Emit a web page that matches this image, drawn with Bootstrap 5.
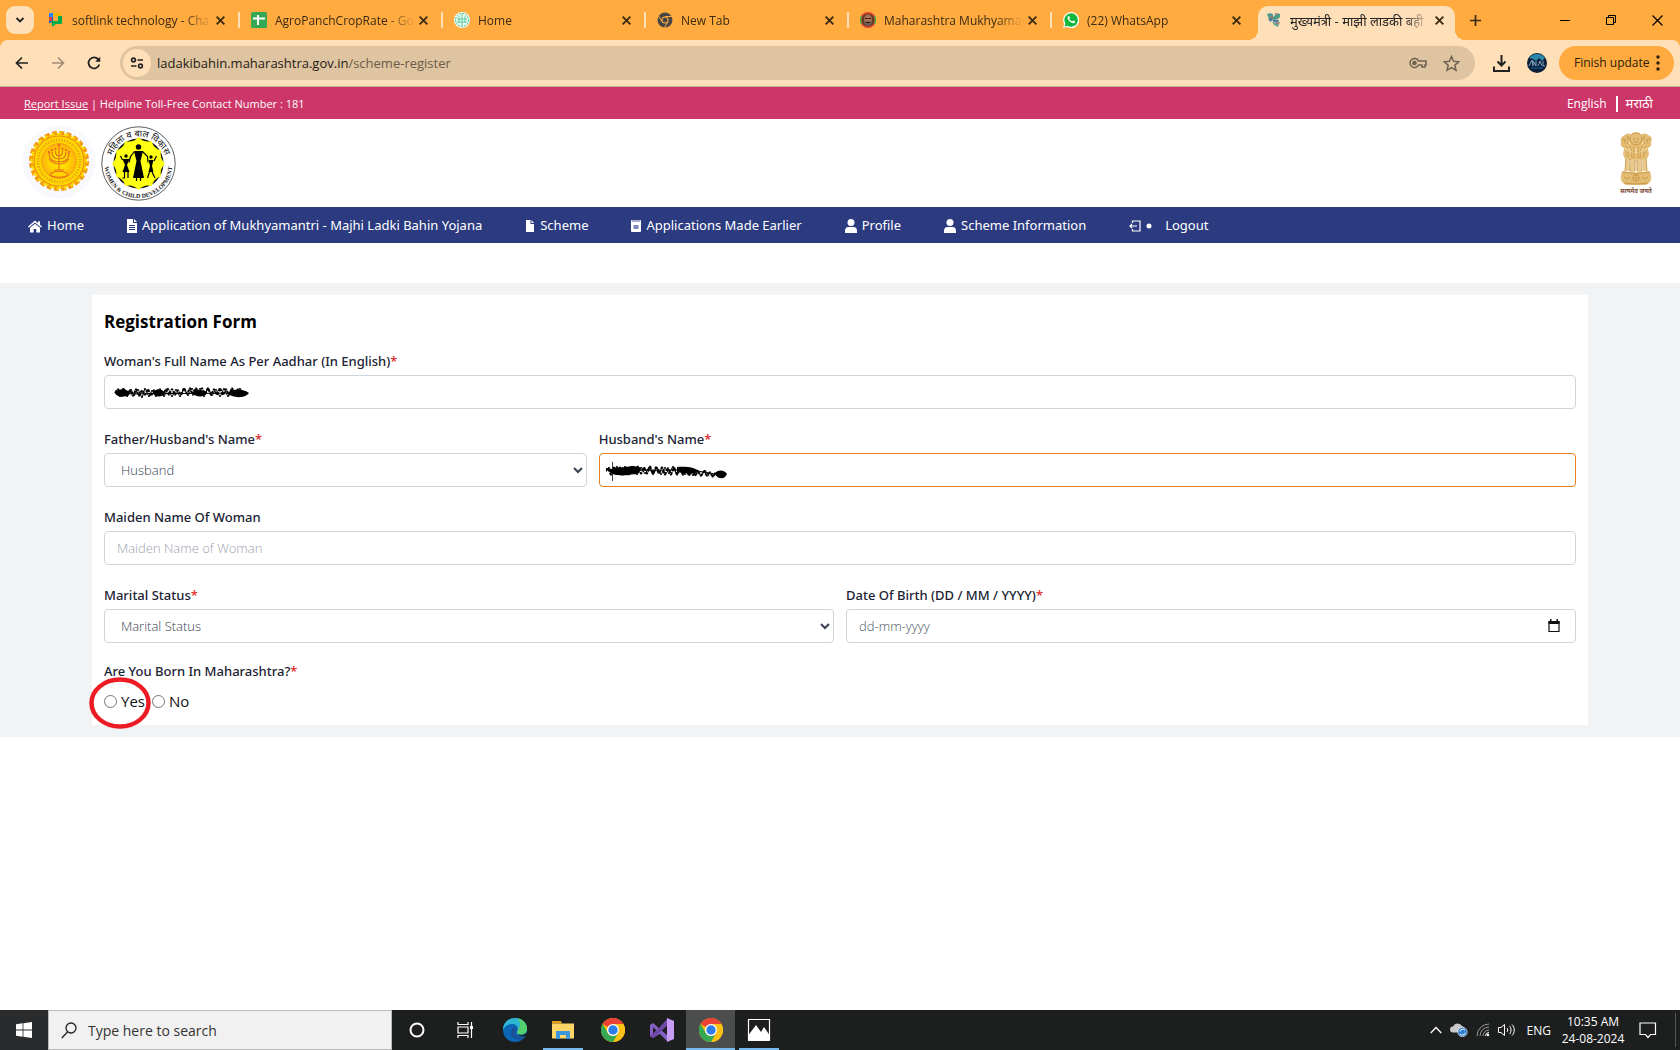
<!DOCTYPE html>
<html lang="en">
<head>
<meta charset="utf-8">
<meta name="viewport" content="width=device-width, initial-scale=1">
<title>Registration Form</title>
<link href="https://cdn.jsdelivr.net/npm/bootstrap@5.3.0/dist/css/bootstrap.min.css" rel="stylesheet">
<style>
body{font-family:"Open Sans","Noto Sans",sans-serif;font-size:14px;background:#fff;color:#111827;overflow-x:hidden}
svg{display:block;flex:none}
.plain{background:none;border:0;padding:0;color:inherit;display:flex;align-items:center;justify-content:center}
.tabstrip{background:#ffab40;height:40px;font-size:12px;color:#3b2a14}
.tab-menu{width:28px;height:28px;border-radius:9px;background:#ffdfb8;margin:0 3px 0 6px}
.btab{width:203px;height:40px;padding:0 13px 0 11px;gap:8px;position:relative;white-space:nowrap}
.btab .ttl{flex:1;overflow:hidden;line-height:18px;padding-top:2px;margin-right:-8px;-webkit-mask-image:linear-gradient(90deg,#000 78%,transparent 98%);mask-image:linear-gradient(90deg,#000 78%,transparent 98%)}
.btab.sep{border-right:2px solid #ffdfb8;border-image:linear-gradient(transparent 12px,#ffdfb8 12px,#ffdfb8 28px,transparent 28px) 1;padding-right:12px}
.btab.current .face{position:absolute;inset:6px 3px 0 3px;background:#ffdfb8;border-radius:10px 10px 0 0}
.btab.current .face::before,.btab.current .face::after{content:"";position:absolute;bottom:0;width:10px;height:10px}
.btab.current .face::before{left:-10px;background:radial-gradient(circle at 0 0,transparent 10px,#ffdfb8 10px)}
.btab.current .face::after{right:-10px;background:radial-gradient(circle at 100% 0,transparent 10px,#ffdfb8 10px)}
.btab.current>*:not(.face){position:relative}
.btab.current .ttl{font-size:13px;color:#222}
.win{width:46px;height:40px;color:#000}
.toolbar-wrap{background:#ffab40}
.toolbar{background:#ffdfb8;height:47px;border-bottom:1px solid #c9ae8c;border-radius:8px 8px 0 0;padding:0 6px 0 4px;color:#222}
.tool{width:36px;height:36px}
.omni{background:#dfc4a1;height:34px;border-radius:17px;margin:0 8px;padding:0 15px 0 3px}
.omni .site{width:28px;height:28px;border-radius:50%;background:#ffdfb8}
.address{font-size:13px;color:#1f1b16;padding:2px 0 0 6px}
.address span{color:#6b5b48}
.finish{background:#ffab40;border:0;border-radius:17px;height:34px;width:115px;font-size:12px;color:#2b1d0b;padding:0 14px 0 15px;white-space:nowrap}
.pinkbar{background:#cd3669;color:#fff;height:32px;font-size:11px;padding:2px 27px 0 24px}
.pinkbar a{color:#fff}
.pinkbar .lang a{text-decoration:none}
.pinkbar .en{font-size:12px}
.pinkbar .mr{font-size:13px}
.vline{width:2px;height:16px;background:#fff;margin:0 8px 0 9px}
.masthead{height:88px;padding:0 26px 0 22px}
.bluenav{background:#2c3b80;height:36px;padding:2px 28px 0;gap:43px}
.bluenav a{color:#fff;text-decoration:none;gap:5px;font-family:"Noto Sans","Open Sans",sans-serif;font-size:13px;white-space:nowrap}
.band{background:#f2f3f5;margin-top:40px;padding:12px 92px}
.sheet{background:#fff;padding:12px}
.sheet h1{font-size:17px;line-height:30px;font-weight:700;margin:0 0 12px;color:#000}
.fields{--bs-gutter-x:12px}
.fields>div{margin-bottom:18px}
.lbl{display:block;font-family:"Noto Sans","Open Sans",sans-serif;font-size:13px;line-height:20px;font-weight:500;padding-top:2px;margin-bottom:4px;color:#1b2333}
.lbl i{color:#e02424;font-style:normal}
.fld{display:block;width:100%;height:34px;border:1px solid #d1d5db;border-radius:4px;background:#fff;padding:0 12px;font-size:13px;font-weight:300;color:#374151;outline:0}
.fld::placeholder{color:#9ca3af;opacity:1}
.fld.hot{border-color:#e87f1e}
.fld.date::placeholder{color:#4b5563}
.blot{position:absolute;left:7px;top:9px}
.choices{font-size:15px;line-height:24px;gap:7px;padding-top:8px;color:#111}
.choices input{width:13px;height:13px;margin:0 4px 0 0}
.choices label{display:flex;align-items:center}
.ring{position:absolute;left:-16px;top:-5px}
.taskbar{background:#1d1f1f;height:40px;color:#fff;margin-top:auto}
.start{width:48px;height:40px;background:#292b2c}
.search{width:344px;height:40px;background:#f1f1f1;border:1px solid #bbb;padding:0 12px;gap:11px}
.search input{border:0;background:none;outline:0;font-size:14px;color:#222;flex:1;padding:0;min-width:0}
.search input::placeholder{color:#333;opacity:1}
.app{width:49px;height:40px}
.app.open{box-shadow:inset 0 -2px #76b9ed}
.app.narrow{width:40px;margin:0 5px 0 4px}
.app.front{background:#4c4e4e}
.tray{font-size:12px;line-height:17px}
.clock{width:76px;text-align:center;margin:0 8px 0 4px}
.notice{margin-right:18px}
</style>
<script src="https://cdn.jsdelivr.net/npm/bootstrap@5.3.0/dist/js/bootstrap.bundle.min.js"></script>
</head>
<body class="d-flex flex-column min-vh-100">
<svg width="0" height="0" class="position-absolute" aria-hidden="true">
<defs>
<symbol id="x" viewBox="0 0 10 10"><path d="M1.500 1.500l7 7M8.500 1.500l-7 7" stroke="#3b2a14" stroke-width="1.700"/></symbol>
<symbol id="chrome" viewBox="0 0 24 24"><circle cx="12" cy="12" r="12" fill="#fbbc04"/><path d="M12 12L1.600 6A12 12 0 0 1 22.400 6z" fill="#ea4335"/><path d="M12 6h10.400A12 12 0 0 1 12 24l5.200-9z" fill="#fbc116"/><path d="M1.600 6A12 12 0 0 0 12 24l5.200-9A6 6 0 0 1 6.800 15z" fill="#34a853"/><circle cx="12" cy="12" r="6" fill="#fff"/><circle cx="12" cy="12" r="4.700" fill="#2f7de9"/></symbol>
<symbol id="user" viewBox="0 0 12 14"><circle cx="6" cy="3.500" r="3.500" fill="#fff"/><path d="M0 14v-2.500C0 9 1.700 8 3.500 8h5C10.300 8 12 9 12 11.500V14z" fill="#fff"/></symbol>
</defs>
</svg>

<header>
<div class="tabstrip d-flex align-items-center">
  <button class="plain tab-menu" aria-label="Search tabs"><svg width="10" height="8" viewBox="0 0 10 8"><path d="M1.500 2L5 5.500 8.500 2" fill="none" stroke="#222" stroke-width="1.800"/></svg></button>
  <div class="btab sep d-flex align-items-center">
    <svg width="16" height="16" viewBox="0 0 16 16"><path d="M1 4h4v6l-4 1z" fill="#0066da"/><path d="M1 2q0-1 1-1h3v4H1z" fill="#2684fc"/><path d="M5 1h7q1 0 1 1v2H5z" fill="#f4b400"/><path d="M1 5h3v4H1z" fill="#ea4335"/><path d="M4 9h6V4h4v7q0 1-1 1H8l-4 3z" fill="#00ac47"/></svg>
    <span class="ttl">softlink technology - Cha</span><button class="plain" aria-label="Close tab"><svg width="11" height="11"><use href="#x"/></svg></button>
  </div>
  <div class="btab sep d-flex align-items-center">
    <svg width="16" height="16" viewBox="0 0 16 16"><rect width="16" height="16" rx="1.500" fill="#34a853"/><path d="M7 3v10M2 6.500h12" stroke="#fff" stroke-width="2"/></svg>
    <span class="ttl">AgroPanchCropRate - Go</span><button class="plain" aria-label="Close tab"><svg width="11" height="11"><use href="#x"/></svg></button>
  </div>
  <div class="btab sep d-flex align-items-center">
    <svg width="16" height="16" viewBox="0 0 16 16"><circle cx="8" cy="8" r="8" fill="#eefcf4"/><g fill="none" stroke="#3dbf92"><circle cx="8" cy="8" r="6.500" stroke-dasharray="2 1"/><path d="M8 2v12M3 7h10M5 4v7M11 4v7M3 10h10" stroke-width=".8"/></g></svg>
    <span class="ttl">Home</span><button class="plain" aria-label="Close tab"><svg width="11" height="11"><use href="#x"/></svg></button>
  </div>
  <div class="btab sep d-flex align-items-center">
    <svg width="16" height="16" viewBox="0 0 16 16"><circle cx="8" cy="8" r="7.500" fill="#474747"/><circle cx="8" cy="8" r="3.600" fill="#ffab40"/><circle cx="8" cy="8" r="2.500" fill="#474747"/><path d="M8 4.500h7M5 9.500L1.500 4M11 9.700L7.500 15.500" stroke="#ffab40" stroke-width="1"/></svg>
    <span class="ttl">New Tab</span><button class="plain" aria-label="Close tab"><svg width="11" height="11"><use href="#x"/></svg></button>
  </div>
  <div class="btab sep d-flex align-items-center">
    <svg width="16" height="16" viewBox="0 0 16 16"><circle cx="8" cy="8" r="7.300" fill="#6b3a26" stroke="#e8432c" stroke-width="1.400"/><path d="M14.500 4a8 8 0 0 1 0 8M1.500 4a8 8 0 0 0 0 8" fill="none" stroke="#43b649" stroke-width="1.400"/><ellipse cx="8" cy="7.500" rx="4" ry="5" fill="#a87458"/><path d="M4 9c1 .6 2 .6 4 .6S11 9.600 12 9c0 4-2 5-4 5S4 13 4 9z" fill="#6d5a52"/><path d="M5 6.500h2.500M8.500 6.500H11M6 10.500h4" stroke="#311"/></svg>
    <span class="ttl">Maharashtra Mukhyamar</span><button class="plain" aria-label="Close tab"><svg width="11" height="11"><use href="#x"/></svg></button>
  </div>
  <div class="btab d-flex align-items-center">
    <svg width="16" height="16" viewBox="0 0 16 16"><path d="M0 16l1.200-4A8 8 0 1 1 4 14.900z" fill="#fff"/><path d="M1.500 14.500l.9-3A6.700 6.700 0 1 1 4.600 13.700z" fill="#12b83d"/><path d="M5 4.500c.8-1 1.300-.6 1.900 1 .2.600-.7 1-.5 1.400.6 1.200 1.600 2 2.700 2.500.5.200 1-1 1.400-.8 1.700.8 2 1 1.300 2-2 2.300-7.600-2-7.200-5z" fill="#fff"/></svg>
    <span class="ttl">(22) WhatsApp</span><button class="plain" aria-label="Close tab"><svg width="11" height="11"><use href="#x"/></svg></button>
  </div>
  <div class="btab current d-flex align-items-center">
    <span class="face"></span>
    <svg width="16" height="16" viewBox="0 0 16 16"><path d="M1 2h6v3l3-3h4v3l-2 2H5L2 5z" fill="#4f9c86"/><path d="M1 2l4-1 1 2zM9 3l3-2 2 2z" fill="#3d92a6"/><path d="M2 6h4l1 2-3 2zM7 7l6 1-1 3-5-1z" fill="#4d7fa0"/><path d="M6 10l3 1 5-1-2 5-4-2z" fill="#66a892"/><path d="M9 1.500l3 1M4 5.500h3M10 12l3-1" stroke="#d0644d"/></svg>
    <span class="ttl">मुख्यमंत्री - माझी लाडकी बही</span><button class="plain" aria-label="Close tab"><svg width="11" height="11"><use href="#x"/></svg></button>
  </div>
  <button class="plain ms-2 px-1" aria-label="New tab"><svg width="11" height="11" viewBox="0 0 11 11"><path d="M5.500 0v11M0 5.500h11" stroke="#3b2a14" stroke-width="1.700"/></svg></button>
  <div class="d-flex ms-auto">
    <button class="win plain" aria-label="Minimize"><svg width="10" height="10"><path d="M0 5.500h10" stroke="#000"/></svg></button>
    <button class="win plain" aria-label="Restore"><svg width="10" height="10" fill="none" stroke="#000"><path d="M.5 2.500h7v7h-7zM2.500 2.500v-2h7v7h-2"/></svg></button>
    <button class="win plain" aria-label="Close"><svg width="11" height="11"><path d="M.5 .5l10 10M10.500 .5l-10 10" stroke="#000" stroke-width="1.200"/></svg></button>
  </div>
</div>
<div class="toolbar-wrap"><div class="toolbar d-flex align-items-center">
  <button class="tool plain" aria-label="Back"><svg width="14" height="14" viewBox="0 0 14 14"><path d="M13 7H2M7 1.500L1.500 7 7 12.500" fill="none" stroke="#222" stroke-width="1.700"/></svg></button>
  <button class="tool plain" aria-label="Forward"><svg width="14" height="14" viewBox="0 0 14 14"><path d="M1 7h11M7 1.500L12.500 7 7 12.500" fill="none" stroke="#a08e77" stroke-width="1.600"/></svg></button>
  <button class="tool plain" aria-label="Reload"><svg width="14" height="14" viewBox="0 0 14 14"><path d="M12.300 8.500A5.500 5.500 0 1 1 11.200 3.300L12.500 5" fill="none" stroke="#222" stroke-width="1.800"/><path d="M13.200 .8v5H8.200z" fill="#222"/></svg></button>
  <div class="omni d-flex align-items-center flex-grow-1">
    <button class="plain site" aria-label="Site information"><svg width="14" height="12" viewBox="0 0 14 12" fill="none" stroke="#222" stroke-width="1.600"><circle cx="3.500" cy="3" r="1.900"/><path d="M7.500 3H13M1 9h5.500"/><circle cx="10.500" cy="9" r="1.900"/></svg></button>
    <a class="address text-decoration-none flex-grow-1" href="#">ladakibahin.maharashtra.gov.in<span>/scheme-register</span></a>
    <svg width="18" height="12" viewBox="0 0 18 12" fill="none" stroke="#6f6250" stroke-width="1.500"><path d="M9.600 4H17v4h-1v2h-3V8H9.600A4.500 4.500 0 1 1 9.600 4z"/><circle cx="5.500" cy="6" r="1.600" fill="#6f6250"/></svg>
    <svg class="ms-3" width="17" height="17" viewBox="0 0 17 17"><path d="M8.500 1.500l2.100 4.800 5.100.5-3.900 3.400 1.200 5.100-4.500-2.700L4 15.300l1.200-5.100L1.300 6.800l5.100-.5z" fill="none" stroke="#6f6250" stroke-width="1.500"/></svg>
  </div>
  <button class="tool plain" aria-label="Downloads"><svg width="17" height="17" viewBox="0 0 17 17" fill="none" stroke="#222" stroke-width="2"><path d="M8.500 0v10M4.500 6.500l4 4 4-4M1 11.500V16h15v-4.500"/></svg></button>
  <button class="tool plain me-1" aria-label="Account"><svg width="20" height="20" viewBox="0 0 20 20"><circle cx="10" cy="10" r="10" fill="#0b1f38"/><path d="M2 5a10 10 0 0 1 16 0l-3 3-3-3-3 3-3-2z" fill="#2b87a8"/><path d="M2 13l3-6 1 6M6 13V8l3 5V8M11 13l2-5 2 5M16 8v5h2" fill="none" stroke="#7fa5c4" stroke-width="1"/><path d="M4 15h12" stroke="#174f80" stroke-width="1.500"/></svg></button>
  <button class="finish d-flex align-items-center justify-content-between">Finish update<svg width="4" height="16" fill="#2b1d0b"><circle cx="2" cy="2" r="1.700"/><circle cx="2" cy="8" r="1.700"/><circle cx="2" cy="14" r="1.700"/></svg></button>
</div></div>
</header>

<div class="pinkbar d-flex align-items-center justify-content-between">
  <div><a href="#">Report Issue</a> | Helpline Toll-Free Contact Number : 181</div>
  <div class="lang d-flex align-items-center"><a class="en" href="#">English</a><span class="vline"></span><a class="mr" href="#" lang="mr">मराठी</a></div>
</div>
<div class="masthead d-flex align-items-center">
  <svg width="74" height="76" viewBox="0 0 74 76" role="img" aria-label="Government of Maharashtra seal">
    <defs><radialGradient id="sun"><stop offset="0" stop-color="#fff000"/><stop offset=".6" stop-color="#ffd200"/><stop offset="1" stop-color="#ffae10"/></radialGradient></defs>
    <circle cx="37" cy="37" r="36.500" fill="#f8f9fc"/>
    <circle cx="37" cy="36" r="28" fill="#ffe000" stroke="#f29a14" stroke-width="4" stroke-dasharray="5 2.330"/>
    <circle cx="37" cy="36" r="27.500" fill="none" stroke="#ffe800" stroke-width="2" stroke-dasharray="2 5.200"/>
    <circle cx="37" cy="36" r="25" fill="#ffdc00" stroke="#f08a10" stroke-width="1.200"/>
    <circle cx="37" cy="36" r="21" fill="none" stroke="#e8891a" stroke-width="3" stroke-dasharray="1.500 1.300" opacity=".65"/>
    <circle cx="37" cy="36" r="17.500" fill="url(#sun)" stroke="#f5a010"/>
    <g fill="none" stroke="#e8721a" stroke-width="1.200"><path d="M37 21v24M27 28c0 7 4 9 10 9s10-2 10-9M30 27c0 5 3 7 7 7s7-2 7-7M33.500 26c0 3 1 5 3.500 5s3.500-2 3.500-5M27 34c3 4 6 5 10 5s7-1 10-5"/><path d="M32 45h10M28 50c3-5 15-5 18 0-3 3-15 3-18 0z" fill="#ffd200"/></g>
    <g fill="#e8721a"><circle cx="37" cy="20" r="1.500"/><circle cx="27" cy="27" r="1.200"/><circle cx="30" cy="25" r="1.200"/><circle cx="33.500" cy="24" r="1.200"/><circle cx="40.500" cy="24" r="1.200"/><circle cx="44" cy="25" r="1.200"/><circle cx="47" cy="27" r="1.200"/></g>
  </svg>
  <svg class="ms-1" width="76" height="76" viewBox="0 0 76 76" role="img" aria-label="Women and Child Development">
    <defs><path id="arcT" d="M11 39a27.500 27.500 0 0 1 55 0"/><path id="arcB" d="M4.500 39a34 34 0 0 0 68 0"/></defs>
    <circle cx="38.500" cy="38.500" r="36.700" fill="#fff" stroke="#333" stroke-width=".8"/>
    <circle cx="38.500" cy="38.500" r="25" fill="#111"/>
    <path d="M38.500 12Q44 18 51.500 16Q54 24 61 25.500Q59.500 33 65 38.500Q59.500 44 61 51.500Q54 53 51.500 61Q44 59 38.500 65Q33 59 25.500 61Q23 53 16 51.500Q17.500 44 12 38.500Q17.500 33 16 25.500Q23 24 25.500 16Q33 18 38.500 12z" fill="#ffff12"/>
    <g fill="#000"><circle cx="38.500" cy="22" r="2.700"/><path d="M34 26h9l-2.500 10 3.500 17H33l3.500-17z"/><circle cx="26" cy="31" r="1.700"/><path d="M22.500 34h7l-2.500 6 2.500 7h-7l2.500-7z"/><circle cx="51" cy="32" r="1.700"/><path d="M48.500 35h5l-1.500 6 1.500 6h-5l1.500-6z"/></g>
    <path d="M34.500 26.500l-4 5-1.500 6M42.500 26.500l5 5 .5 6M22.500 35l-2-4M54 36l2.500-5M24.500 47v6h-2M28 47v6M36.500 52v4M40.500 52v4M49.500 47l-2 6M52 47l3 6" fill="none" stroke="#000" stroke-width="1.200"/>
    <text font-size="9" fill="#111" text-anchor="middle"><textPath href="#arcT" startOffset="50%">महिला व बाल विकास</textPath></text>
    <text font-size="6" font-family="Liberation Serif,serif" font-weight="700" fill="#222" text-anchor="middle"><textPath href="#arcB" startOffset="50%">WOMEN &amp; CHILD DEVELOPMENT</textPath></text>
  </svg>
  <svg class="ms-auto" width="36" height="64" viewBox="0 0 36 64" role="img" aria-label="State Emblem of India">
    <path d="M7 4c2-2 5-2 6 0 1-3 9-3 10 0 2-2 5-2 7 0 3 1 5 4 3 7 1 3 0 5-3 6l1 6-2 5c-3 2-19 2-22 0l-2-5 1-6c-3-1-4-4-3-6-1-3 1-6 4-7z" fill="#e3bd76"/>
    <path d="M8 27l3 1 1 12H7zM13 28h4v13h-5zM19 28h4l1 13h-5zM25 28l3-1 1 13h-4z" fill="#e9cb90"/>
    <path d="M5 40q13 3 26 0q3 4 2 9-2 5-7 5H10q-5 0-7-5-1-5 2-9z" fill="#e3bd76"/>
    <g fill="none" stroke="#c9913a" stroke-width=".9"><path d="M12 6c0 5 2 8 6 8s6-3 6-8M13 4c2-3 8-3 10 0M15 8h2M19 8h2M16 11h4M4 8l4 1-2 3M32 8l-4 1 2 3M9 5c2 2 2 5 0 8M27 5c-2 2-2 5 0 8"/><path d="M8 15c2 5 2 8 2 12M12 15c1 4 2 9 2 13M16 16v12M20 16v12M24 15c-1 4-2 9-2 13M28 15c-2 5-2 8-2 12" stroke-dasharray="2 1"/><path d="M8 28l-1 12M12 28v12M17 29v11M19 29v11M24 29v11M28 28l1 12M4 41q14 3 28 0M6 52q12 2 24 0M6 46l3 2 3-2M24 46l3 2 3-2"/><circle cx="18" cy="47" r="3.200"/><path d="M18 44v6M15 47h6" stroke-width=".6"/></g>
    <g fill="none" stroke="#fff3d5" stroke-width=".8"><path d="M7 17l3 3M11 18l2 4M18 17v6M25 18l-2 4M29 17l-3 3M10 10l2 3M26 10l-2 3"/></g>
    <text x="18" y="62" font-size="6" font-weight="700" text-anchor="middle" fill="#7a4a35">सत्यमेव जयते</text>
  </svg>
</div>
<nav class="bluenav d-flex align-items-center">
  <a class="d-flex align-items-center" href="#"><svg width="14" height="13" viewBox="0 0 14 13" fill="#fff"><path d="M7 .5L0 6.500l.9 1L7 2.500l6.100 5 .9-1-2-1.700V1.200h-1.800v2z"/><path d="M7 3.700L2 7.800V12.500h3.700V9h2.600v3.500H12V7.800z"/></svg>Home</a>
  <a class="d-flex align-items-center" href="#"><svg width="10" height="14" viewBox="0 0 10 14"><path d="M0 0h6v4h4v10H0z" fill="#fff"/><path d="M7 0l3 3H7z" fill="#fff"/><path d="M2 6.500h6M2 8.500h6M2 10.500h6" stroke="#2c3b80"/></svg>Application of Mukhyamantri - Majhi Ladki Bahin Yojana</a>
  <a class="d-flex align-items-center" href="#"><svg width="10" height="12" viewBox="0 0 10 12" fill="#fff"><path d="M1 0h4.500v4H9v8H1zM6.500 0L9 3H6.500z"/></svg>Scheme</a>
  <a class="d-flex align-items-center" href="#"><svg width="10" height="12" viewBox="0 0 10 12"><rect width="10" height="12" rx="1" fill="#fff"/><path d="M2 0v2M4 0v2M6 0v2M8 0v2" stroke="#2c3b80" stroke-width=".8"/><path d="M2.500 5h5v4h-5z" fill="#7f89b5"/></svg>Applications Made Earlier</a>
  <a class="d-flex align-items-center" href="#"><svg width="12" height="14"><use href="#user"/></svg>Profile</a>
  <a class="d-flex align-items-center" href="#"><svg width="12" height="14"><use href="#user"/></svg>Scheme Information</a>
  <a class="d-flex align-items-center" href="#"><svg width="12" height="12" viewBox="0 0 12 12" fill="none" stroke="#fff" stroke-width="1.200"><path d="M3.500 3V1h7.500v10H3.500V9M8 6H1M3 4L1 6l2 2"/></svg><svg width="6" height="6"><circle cx="3" cy="3" r="2.500" fill="#fff"/></svg><span class="ps-2">Logout</span></a>
</nav>

<main class="band">
<form class="sheet">
  <h1>Registration Form</h1>
  <div class="row fields">
    <div class="col-12">
      <label class="lbl" for="fullname">Woman's Full Name As Per Aadhar (In English)<i>*</i></label>
      <div class="position-relative"><input class="fld" id="fullname" type="text">
        <svg class="blot" width="142" height="18" viewBox="-2 0 142 18"><g fill="none" stroke="#000" stroke-linejoin="bevel"><path stroke-width="2" stroke-dasharray="3 1" d="M2 9l3-4 3 7 3-7 3 7 3-6 3 6 3-7 3 7 3-6 3 5 3-6 3 7 3-6 3 5 3-6 3 6 3-6 3 6 3-6 3 6 3-5 3 5 3-7 3 6 3-6 3 7 3-7 3 6 3-6 3 6 3-6 3 7 3-6 3 6 3-7 3 7 3-6 3 6 3-7 3 7 3-6 3 6"/><path stroke-width="1" d="M3 6l4 7 3-9 4 9 4-8 3 7 4-7 4 9 3-10 4 9 3-7 4 7 4-8 4 8 4-9 4 9 4-8 4 8 4-9 4 8 4-8 4 7 4-7 4 9 4-9 4 8 4-7 4 8 4-9 4 9 4-8 4 7 4-8 4 8M3 10l130-1"/></g><path d="M2 9c2-5 12-5 15 0-3 5-13 5-15 0zM40 9c2-5 9-5 12 0-3 5-10 4-12 0zM79 9c4-5 12-3 15 0-3 5-12 4-15 0zM115 9c5-5 16-4 21 0-4 6-18 5-21 0z"/></svg></div>
    </div>
    <div class="col-4">
      <label class="lbl" for="relation">Father/Husband's Name<i>*</i></label>
      <select class="fld" id="relation"><option>Husband</option></select>
    </div>
    <div class="col-8">
      <label class="lbl" for="husband">Husband's Name<i>*</i></label>
      <div class="position-relative"><input class="fld hot" id="husband" type="text">
        <svg class="blot" width="124" height="20" viewBox="3 0 124 20"><path d="M9.500 0v19" stroke="#374151"/><g fill="none" stroke="#000" stroke-linejoin="bevel"><path stroke-width="2" stroke-dasharray="4 1" d="M1 9l4-3 3 7 3-8 3 8 3-8 3 8 3-8 3 8 3-8 3 7 3-8 3 8 3-7 3 7 3-8 3 8 3-7 3 7 3-7 3 8 3-7 3 7 3-8 3 8 3-7 3 7 3-7 3 8 3-7 3 7 3-5 3 5 3-5 3 5 3-4 3 5 3-5 3 5 3-4"/><path stroke-width="1" d="M2 11l4-6 4 7 4-8 4 8 4-8 4 9 4-9 4 9 4-8 4 7 4-7 4 8 4-8 4 8 4-8 4 7 4-8 4 9 4-7 4 7 4-7 4 8 4-6 4 6 4-6 4 6M4 8h84l24 4"/></g><path d="M6 9c4-5 12-3 18-4 5-2 9-1 14 1l-2 5c-8 2-26 5-30-2zM74 5c8-1 18 0 22 4-4 4-16 2-22 1zM112 12c2-5 10-4 12 0-2 6-10 5-12 0z"/></svg></div>
    </div>
    <div class="col-12">
      <label class="lbl" for="maiden">Maiden Name Of Woman</label>
      <input class="fld" id="maiden" type="text" placeholder="Maiden Name of Woman">
    </div>
    <div class="col-6">
      <label class="lbl" for="marital">Marital Status<i>*</i></label>
      <select class="fld" id="marital"><option>Marital Status</option></select>
    </div>
    <div class="col-6">
      <label class="lbl" for="dob">Date Of Birth (DD / MM / YYYY)<i>*</i></label>
      <div class="position-relative"><input class="fld date" id="dob" type="text" placeholder="dd-mm-yyyy">
      <button type="button" class="plain position-absolute top-50 end-0 translate-middle-y me-3" aria-label="Pick a date"><svg width="12" height="14" viewBox="0 0 12 14"><path d="M1 2.500h10v10H1z" fill="none" stroke="#111" stroke-width="1.200"/><path d="M.5 2h11v3H.5zM2 0h1.500v3H2zM8.500 0H10v3H8.500z" fill="#111"/></svg></button></div>
    </div>
    <div class="col-12 mb-0">
      <div class="lbl pt-0 mb-0" id="bornlbl">Are You Born In Maharashtra?<i>*</i></div>
      <div class="choices d-flex position-relative" role="radiogroup" aria-labelledby="bornlbl">
        <label><input type="radio" name="born">Yes</label>
        <label><input type="radio" name="born">No</label>
        <svg class="ring" width="64" height="54" viewBox="0 0 64 54"><ellipse cx="32" cy="27" rx="28.500" ry="23.500" fill="none" stroke="#ed1c24" stroke-width="4.500"/></svg>
      </div>
    </div>
  </div>
</form>
</main>

<footer class="taskbar d-flex align-items-center">
  <button class="plain start" aria-label="Start"><svg width="16" height="16" viewBox="0 0 16 16" fill="#fff"><path d="M0 2.300L6.600 1.300V7.600H0zM7.400 1.200L16 0v7.600H7.400zM0 8.400h6.600v6.300L0 13.700zM7.400 8.400H16V16l-8.600-1.200z"/></svg></button>
  <div class="search d-flex align-items-center"><svg width="16" height="17" viewBox="0 0 16 17" fill="none" stroke="#222" stroke-width="1.300"><circle cx="10" cy="6" r="5"/><path d="M6.500 10L.8 16"/></svg><input type="text" aria-label="Type here to search" placeholder="Type here to search"></div>
  <button class="app plain" aria-label="Cortana"><svg width="16" height="16"><circle cx="8" cy="8" r="6.500" fill="none" stroke="#fff" stroke-width="2"/></svg></button>
  <button class="app plain" aria-label="Task view"><svg width="17" height="16" viewBox="0 0 17 16" fill="none" stroke="#fff" stroke-width="1.200"><path d="M1 0v2.500h10V0M1 16v-2.500h10V16M1 5h10v6H1zM14.500 0v16"/><path d="M13 4h3v3h-3z" fill="#fff" stroke="none"/></svg></button>
  <button class="app plain" aria-label="Edge"><svg width="24" height="24" viewBox="0 0 24 24"><circle cx="12" cy="12" r="12" fill="#0c66b5"/><path d="M0 12C0 4 6 0 12 0c7 0 12 5 12 10.500 0 4-3 6-6 6-2.500 0-4-1-4-2 0-1 1-1.500 1-3.500C15 8 12 6 9 6 4 6 1 9 0 12z" fill="#2fb6d3"/><path d="M14 .3c6 1 10 5 10 10.200 0 4-3 6-6 6-2.500 0-4-1-4-2 0-1 1-1.500 1-3.500C18 9 18 4 14 .3z" fill="#54d16f"/><path d="M9 11c-3 5 1 11 8 10.500 2 0 4-.8 5-2C16 20 12 18 12 14.500c0-1.800 1-2 1-3C13 9 11 9 9 11z" fill="#1b4f96"/><path d="M14 15.500c1 2 6 2.500 10-1l-.5 2.500c-3 2.500-8 1.500-9.500-1.500z" fill="#1d1f1f"/></svg></button>
  <button class="app narrow open plain" aria-label="File Explorer"><svg width="22" height="19" viewBox="0 0 22 19"><path d="M0 0h9l1 2.500H0z" fill="#e0a21b"/><path d="M0 2.500h22V17.500H0z" fill="#ffd667"/><path d="M4 18v-8h14v8h-4v-4H8v4z" fill="#3a96dd"/></svg></button>
  <button class="app plain" aria-label="Chrome"><svg width="24" height="24"><use href="#chrome"/></svg></button>
  <button class="app plain" aria-label="Visual Studio"><svg width="24" height="24" viewBox="0 0 24 24"><path d="M0 7l3-2 15 13v6L3 9v7l4-4 4 3-8 5-3-2z" fill="#8661c5"/><path d="M18 0v7L3 20l-3-2 7-6z" fill="#7048a8"/><path d="M17 0l7 3v18l-7 3z" fill="#c99cf5"/></svg></button>
  <button class="app open front plain" aria-label="Chrome, current window"><svg width="24" height="24"><use href="#chrome"/></svg></button>
  <button class="app narrow open plain" aria-label="Photos"><svg width="24" height="24" viewBox="0 0 24 24"><path d="M1.500 1.500h21v21h-21z" fill="#1d1f1f" stroke="#fff" stroke-width="1.200"/><path d="M1.500 17L9 7l5 7 3-5 5.500 8v5.500h-21z" fill="#fff"/></svg></button>
  <div class="tray d-flex align-items-center ms-auto">
    <svg width="12" height="8" viewBox="0 0 12 8"><path d="M.7 7L6 1.500 11.300 7" fill="none" stroke="#fff" stroke-width="1.300"/></svg>
    <svg class="ms-2 me-2" width="18" height="14" viewBox="0 0 18 14"><path d="M3 9.500a3 3 0 0 1 0-6A5 5 0 0 1 12 3a4 4 0 0 1 2 6.500z" fill="#c9c9c9"/><circle cx="12.500" cy="9" r="4.700" fill="#2d7dd2" stroke="#fff" stroke-width=".6"/><path d="M10 8.500a2.700 2.700 0 0 1 5-1M15 9.800a2.700 2.700 0 0 1-5 1" stroke="#fff" fill="none"/></svg>
    <svg width="14" height="14" viewBox="0 0 14 14" fill="none" stroke="#999"><path d="M1 13A12 12 0 0 1 13 1M4 13A9 9 0 0 1 13 4M7 13a6 6 0 0 1 6-6" /><path d="M9.500 13A3.500 3.500 0 0 1 13 9.500" stroke="#fff"/><circle cx="12" cy="12" r="1.200" fill="#fff" stroke="none"/></svg>
    <svg class="ms-2 me-2" width="17" height="14" viewBox="0 0 17 14" fill="none" stroke="#fff"><path d="M.5 4.500H3l3.500-3v11L3 9.500H.5zM9 5c1 1 1 3 0 4M11.500 3c2 2 2 6 0 8M14 1.500c3 3 3 8 0 11"/></svg>
    <span class="ms-1">ENG</span>
    <div class="clock">10:35 AM<br>24-08-2024</div>
    <svg class="notice" width="18" height="17" viewBox="0 0 18 17"><path d="M1 1h15.500v11.500H11.500L9 15.500 6.500 12.500H1z" fill="none" stroke="#fff" stroke-width="1.200"/></svg>
    <div class="vr me-1"></div>
  </div>
</footer>
</body>
</html>
